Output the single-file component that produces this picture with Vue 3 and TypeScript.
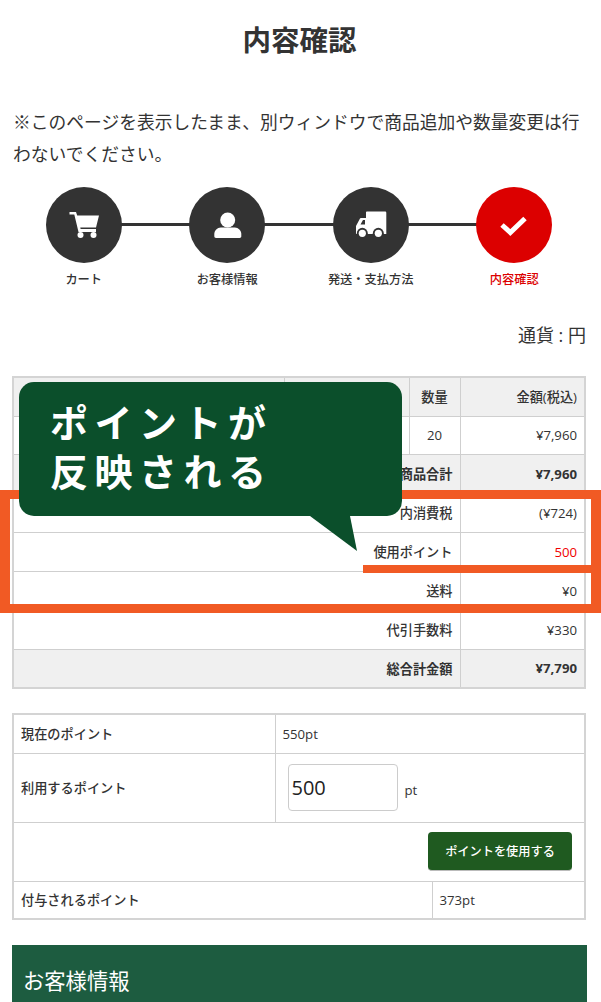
<template>
  <div class="page">
    <h1 class="title">内容確認</h1>
    <p class="note">※このページを表示したまま、別ウィンドウで商品追加や数量変更は行わないでください。</p>

    <ol class="steps">
      <li v-for="step in steps" :key="step.label" class="step" :class="{ current: step.current }">
        <span class="circle">
          <svg v-if="step.icon === 'cart'" viewBox="0 1 44 40" width="44" height="40">
            <path d="M7.500 8h6.500l1.200 3.500H37l-3 12H18.300l.3 1.500H34v3H16.500L12.300 10.500H7.500z" />
            <circle cx="18.500" cy="31" r="3" />
            <circle cx="31.500" cy="31" r="3" />
          </svg>
          <svg v-else-if="step.icon === 'user'" viewBox="-1 1 44 40" width="44" height="40">
            <circle cx="21.700" cy="16" r="7.500" />
            <path d="M10 34c-1 0-1.700-.7-1.700-1.700V30c0-3.500 3-6.500 6.500-6.500h14c3.500 0 6.500 3 6.500 6.500v2.300c0 1-.7 1.700-1.700 1.700z" />
          </svg>
          <svg v-else-if="step.icon === 'truck'" viewBox="0 1 44 40" width="44" height="40">
            <path
              d="M17 8.500c0-.6.5-1 1-1h18c.7 0 1.300.5 1.300 1.300V30H7v-8l4-7.500c.2-.3.5-.5.8-.5H17zM11.500 20.500H16V16h-2z"
              fill-rule="evenodd"
            />
            <circle class="wheel-gap" cx="13.300" cy="29.300" r="5.500" />
            <circle class="wheel-gap" cx="29.300" cy="29.300" r="5.500" />
            <circle cx="13.300" cy="29.300" r="3.600" />
            <circle cx="29.300" cy="29.300" r="3.600" />
          </svg>
          <svg v-else viewBox="0 1 44 40" width="44" height="40">
            <polyline class="check" points="10,21 18.300,28.500 33,14.500" />
          </svg>
        </span>
        <span class="step-label">{{ step.label }}</span>
      </li>
    </ol>

    <p class="currency">通貨 : 円</p>

    <table class="cart-table">
      <colgroup>
        <col style="width: 271px" />
        <col style="width: 125px" />
        <col style="width: 51px" />
        <col />
      </colgroup>
      <tbody>
        <tr class="shaded">
          <td></td>
          <td></td>
          <td class="center">数量</td>
          <td class="right">金額(税込)</td>
        </tr>
        <tr class="short">
          <td></td>
          <td></td>
          <td class="center">20</td>
          <td class="right">¥7,960</td>
        </tr>
        <tr v-for="row in totals" :key="row.label" :class="{ shaded: row.strong }">
          <td colspan="3" class="right" :class="{ strong: row.strong }">{{ row.label }}</td>
          <td class="right" :class="{ strong: row.strong, red: row.red }">{{ row.value }}</td>
        </tr>
      </tbody>
    </table>

    <table class="point-table">
      <colgroup>
        <col style="width: 262px" />
        <col style="width: 157px" />
        <col />
      </colgroup>
      <tbody>
        <tr class="r-39">
          <td>現在のポイント</td>
          <td colspan="2">550pt</td>
        </tr>
        <tr class="r-69">
          <td>利用するポイント</td>
          <td colspan="2" class="input-cell">
            <input class="point-input" type="text" value="500" />
            <span class="unit">pt</span>
          </td>
        </tr>
        <tr class="r-59">
          <td colspan="3" class="button-cell">
            <button class="use-button" type="button">ポイントを使用する</button>
          </td>
        </tr>
        <tr class="r-38">
          <td colspan="2">付与されるポイント</td>
          <td>373pt</td>
        </tr>
      </tbody>
    </table>

    <h2 class="section-head">お客様情報</h2>

    <!-- annotation layer painted over the screenshot -->
    <div class="frame"></div>
    <div class="frame-line"></div>
    <div class="callout">
      ポイントが<br />反映される
      <svg class="callout-tail" viewBox="0 0 47 36" width="47" height="36">
        <path d="M0 0h40l7 35z" />
      </svg>
    </div>
  </div>
</template>

<script setup lang="ts">
interface Step {
  label: string
  icon: 'cart' | 'user' | 'truck' | 'check'
  current?: boolean
}

interface TotalRow {
  label: string
  value: string
  strong?: boolean
  red?: boolean
}

const steps: Step[] = [
  { label: 'カート', icon: 'cart' },
  { label: 'お客様情報', icon: 'user' },
  { label: '発送・支払方法', icon: 'truck' },
  { label: '内容確認', icon: 'check', current: true },
]

const totals: TotalRow[] = [
  { label: '商品合計', value: '¥7,960', strong: true },
  { label: '内消費税', value: '(¥724)' },
  { label: '使用ポイント', value: '500', red: true },
  { label: '送料', value: '¥0' },
  { label: '代引手数料', value: '¥330' },
  { label: '総合計金額', value: '¥7,790', strong: true },
]
</script>

<style>
html,
body {
  margin: 0;
  background: #fff;
  overflow: hidden;
}
</style>

<style scoped>
.page {
  position: relative;
  box-sizing: border-box;
  height: 1002px;
  overflow: hidden;
  padding: 0 14px 0 12px;
  background: #fff;
  color: #333;
  font-family: 'Open Sans', 'Noto Sans CJK JP', sans-serif;
}

.title {
  margin: 0;
  padding-top: 20px;
  font-size: 28.5px;
  line-height: 40px;
  font-weight: 700;
  text-align: center;
}

.note {
  margin: 46px 0 0;
  padding-left: 1px;
  font-size: 17.75px;
  line-height: 32px;
}

.steps {
  display: grid;
  grid-template-columns: repeat(4, 1fr);
  margin: 17px 0 0;
  padding: 0 1px 0 0;
  list-style: none;
}

.step {
  position: relative;
  display: flex;
  flex-direction: column;
  align-items: center;
}

.step:not(:last-child)::after {
  content: '';
  position: absolute;
  top: 36px;
  left: 50%;
  width: 100%;
  height: 3px;
  background: #333;
}

.circle {
  position: relative;
  z-index: 1;
  display: flex;
  align-items: center;
  justify-content: center;
  width: 76px;
  height: 76px;
  border-radius: 50%;
  background: #333;
}

.circle svg {
  fill: #fff;
}

.circle .wheel-gap {
  fill: #333;
}

.circle .check {
  fill: none;
  stroke: #fff;
  stroke-width: 5;
}

.step-label {
  margin-top: 8px;
  font-size: 12.25px;
  line-height: 18px;
  font-weight: 500;
}

.current .circle {
  background: #dc0000;
}

.current .step-label {
  color: #dc0000;
}

.currency {
  margin: 33px 1px 0 0;
  font-size: 18px;
  line-height: 26px;
  text-align: right;
}

table {
  width: 574px;
  table-layout: fixed;
  border-collapse: collapse;
  border: 2px solid #d4d4d4;
  font-size: 13.2px;
}

td {
  padding: 0 7px;
  border: 1px solid #cfcfcf;
  font-weight: 500;
}

.cart-table {
  margin-top: 28px;
}

.cart-table tr {
  height: 39px;
}

.cart-table tr.short {
  height: 38px;
}

.shaded td {
  background: #f0f0f0;
}

.center {
  text-align: center;
}

.right {
  text-align: right;
}

.strong {
  font-weight: 700;
}

.red {
  color: #f00000;
}

.point-table {
  margin-top: 24px;
}

.r-39 {
  height: 39px;
}

.r-69 {
  height: 69px;
}

.r-59 {
  height: 59px;
}

.r-38 {
  height: 38px;
}

.input-cell {
  padding-left: 12px;
}

.point-input {
  box-sizing: border-box;
  width: 110px;
  height: 47px;
  padding: 0 3px;
  border: 1px solid #ccc;
  border-radius: 4px;
  color: #222;
  font-family: inherit;
  font-size: 20px;
  vertical-align: middle;
}

.unit {
  margin-left: 7px;
  vertical-align: -4px;
}

.button-cell {
  padding-right: 12px;
  text-align: right;
}

.use-button {
  width: 144px;
  height: 39px;
  border: 0;
  border-bottom: 1px solid #bbb;
  border-radius: 4px;
  background: #1f5a20;
  color: #fff;
  font-family: inherit;
  font-size: 12.2px;
  font-weight: 500;
  vertical-align: middle;
}

.section-head {
  margin: 25px 0 0;
  padding: 20px 11px 0;
  height: 70px;
  background: #1d5c40;
  color: #fff;
  font-size: 21.3px;
  line-height: 32px;
  font-weight: 400;
}

.frame {
  position: absolute;
  top: 490px;
  left: 0;
  width: 601px;
  height: 123px;
  box-sizing: border-box;
  border: solid #f15a24;
  border-width: 9px 10px;
}

.frame-line {
  position: absolute;
  top: 565px;
  left: 363px;
  width: 238px;
  height: 8px;
  background: #f15a24;
}

.callout {
  position: absolute;
  top: 382px;
  left: 19px;
  box-sizing: border-box;
  width: 383px;
  height: 134px;
  padding: 16px 0 0 31px;
  border-radius: 15px;
  background: #0b4f2b;
  color: #fff;
  font-size: 38px;
  line-height: 49px;
  font-weight: 700;
  letter-spacing: 6.5px;
}

.callout-tail {
  position: absolute;
  top: 134px;
  left: 291px;
  fill: #0b4f2b;
}
</style>
